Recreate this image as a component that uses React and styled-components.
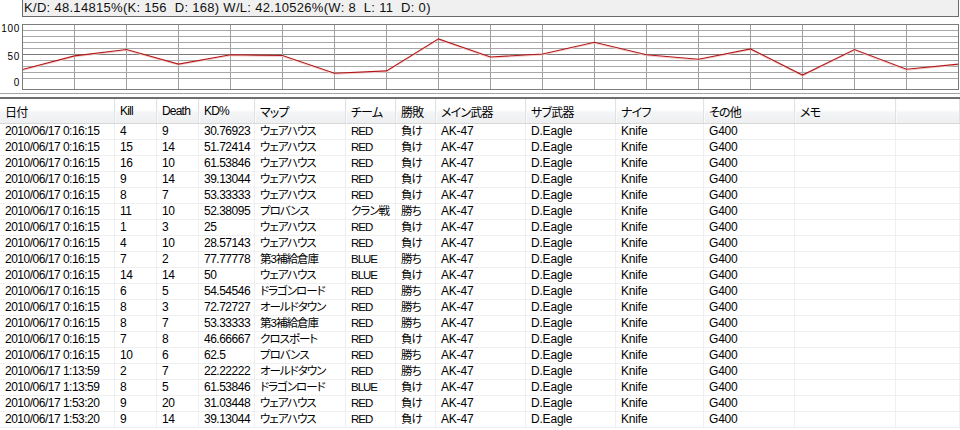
import React from "react";
import styled, { createGlobalStyle, css } from "styled-components";

const GlobalStyle = createGlobalStyle`
  html, body {
    margin: 0;
    padding: 0;
    background: #ffffff;
  }
  body {
    width: 960px;
    height: 430px;
    overflow: hidden;
    font-family: "Liberation Sans", "Noto Sans CJK JP", sans-serif;
    color: #000;
  }
`;

const matches = [
  ["2010/06/17 0:16:15", 4, 9, "30.76923", "ウェアハウス", "RED", "負け"],
  ["2010/06/17 0:16:15", 15, 14, "51.72414", "ウェアハウス", "RED", "負け"],
  ["2010/06/17 0:16:15", 16, 10, "61.53846", "ウェアハウス", "RED", "負け"],
  ["2010/06/17 0:16:15", 9, 14, "39.13044", "ウェアハウス", "RED", "負け"],
  ["2010/06/17 0:16:15", 8, 7, "53.33333", "ウェアハウス", "RED", "負け"],
  ["2010/06/17 0:16:15", 11, 10, "52.38095", "プロバンス", "クラン戦", "勝ち"],
  ["2010/06/17 0:16:15", 1, 3, "25", "ウェアハウス", "RED", "負け"],
  ["2010/06/17 0:16:15", 4, 10, "28.57143", "ウェアハウス", "RED", "負け"],
  ["2010/06/17 0:16:15", 7, 2, "77.77778", "第3補給倉庫", "BLUE", "勝ち"],
  ["2010/06/17 0:16:15", 14, 14, "50", "ウェアハウス", "BLUE", "負け"],
  ["2010/06/17 0:16:15", 6, 5, "54.54546", "ドラゴンロード", "RED", "勝ち"],
  ["2010/06/17 0:16:15", 8, 3, "72.72727", "オールドタウン", "RED", "勝ち"],
  ["2010/06/17 0:16:15", 8, 7, "53.33333", "第3補給倉庫", "RED", "勝ち"],
  ["2010/06/17 0:16:15", 7, 8, "46.66667", "クロスポート", "RED", "負け"],
  ["2010/06/17 0:16:15", 10, 6, "62.5", "プロバンス", "RED", "勝ち"],
  ["2010/06/17 1:13:59", 2, 7, "22.22222", "オールドタウン", "RED", "勝ち"],
  ["2010/06/17 1:13:59", 8, 5, "61.53846", "ドラゴンロード", "BLUE", "負け"],
  ["2010/06/17 1:53:20", 9, 20, "31.03448", "ウェアハウス", "RED", "負け"],
  ["2010/06/17 1:53:20", 9, 14, "39.13044", "ウェアハウス", "RED", "負け"],
];

const columns = [
  { title: "日付", width: 115, kind: "num" },
  { title: "Kill", width: 42, kind: "num" },
  { title: "Death", width: 42, kind: "num" },
  { title: "KD%", width: 56, kind: "num" },
  { title: "マップ", width: 91, kind: "jp" },
  { title: "チーム", width: 50, kind: "jp" },
  { title: "勝敗", width: 40, kind: "jp" },
  { title: "メイン武器", width: 90, kind: "latin" },
  { title: "サブ武器", width: 90, kind: "latin" },
  { title: "ナイフ", width: 88, kind: "latin" },
  { title: "その他", width: 91, kind: "latin" },
  { title: "メモ", width: 101, kind: "latin" },
];

const gridTemplate = columns.map((c) => `${c.width}px`).join(" ") + " 1fr";

/* ---------- top summary panel ---------- */

const TopPanel = styled.section`
  height: 94px;
  box-sizing: border-box;
  border-bottom: 1px solid #a3a3a3;
  display: flex;
  flex-direction: column;
`;

const StatBox = styled.div`
  margin-left: 22px;
  width: 937px;
  height: 17px;
  box-sizing: border-box;
  border: 1px solid #6b6b6b;
  border-top: none;
  background: #f0f0f0;
  padding-left: 1px;
  font-family: "Liberation Sans", sans-serif;
  font-size: 13px;
  line-height: 15px;
  letter-spacing: 0.3px;
  white-space: pre;
  color: #111;
`;

const ChartRow = styled.div`
  display: flex;
  margin-top: 7px;
`;

const AxisColumn = styled.div`
  width: 22px;
  display: flex;
  flex-direction: column;
  align-items: flex-end;
  padding-right: 2px;
  box-sizing: border-box;
`;

const AxisLabel = styled.span`
  margin-top: ${(p) => p.$gap}px;
  font-family: "Liberation Sans", sans-serif;
  font-size: 10px;
  line-height: 10px;
  letter-spacing: 0.7px;
  color: #000;
`;

/* ---------- list view ---------- */

const ListView = styled.section`
  margin-top: 3px;
  border-top: 2px solid #6f6f6f;
  flex: 1;
  overflow: hidden;
`;

const HeaderRow = styled.div`
  display: grid;
  grid-template-columns: ${gridTemplate};
  height: 25px;
  box-sizing: border-box;
  border-bottom: 1px solid #d8d8d8;
  background: linear-gradient(to bottom, #ffffff 0%, #ffffff 45%, #f4f5f6 55%, #eeeff1 100%);
`;

const HeaderCell = styled.div`
  display: flex;
  align-items: center;
  padding-left: 5px;
  border-right: 1px solid #dfe2e6;
  box-shadow: 1px 0 0 #fbfbfb;
  font-size: 12px;
  letter-spacing: -0.8px;
  font-feature-settings: "palt";
  white-space: nowrap;
  overflow: hidden;
  color: #000;
`;

const DataRow = styled.div`
  display: grid;
  grid-template-columns: ${gridTemplate};
  height: 16px;
`;

const cellKinds = {
  num: css`
    font-size: 12px;
    letter-spacing: -0.5px;
  `,
  jp: css`
    font-size: 11.5px;
    letter-spacing: -1px;
  `,
  latin: css`
    font-size: 12px;
    letter-spacing: -0.2px;
  `,
};

const Cell = styled.div`
  box-sizing: border-box;
  padding-left: 5px;
  border-right: 1px solid #efefef;
  border-bottom: 1px solid #efefef;
  font-family: "Liberation Sans", "Noto Sans CJK JP", sans-serif;
  line-height: 15px;
  font-feature-settings: "palt";
  white-space: nowrap;
  overflow: hidden;
  color: #000;
  ${(p) => cellKinds[p.$kind] || cellKinds.latin}
`;

const Page = styled.div`
  width: 960px;
  height: 430px;
  display: flex;
  flex-direction: column;
  overflow: hidden;
  background: #fff;
`;

/* ---------- KD% line chart ---------- */

function KdChart({ values }) {
  const w = 937;
  const h = 66;
  const step = 52;
  const pts = values.map((v, i) => [0.5 + i * step, 65.5 - v * 0.65]);
  const line = pts.map(([x, y]) => `${x},${y.toFixed(1)}`).join(" ");
  const halo = pts.map(([x, y]) => `${x},${(y + 1).toFixed(1)}`).join(" ");
  const hLines = [6.5, 12.5, 18.5, 24.5, 36.5, 42.5, 48.5, 54.5];
  const vLines = values.slice(1, -1).map((_, i) => 0.5 + (i + 1) * step);
  return (
    <svg width={w} height={h} viewBox={`0 0 ${w} ${h}`} style={{ display: "block" }}>
      <rect x="0" y="0" width={w} height={h} fill="#ffffff" />
      {hLines.map((y) => (
        <line key={y} x1="0" x2={w} y1={y} y2={y} stroke="#a8a8a8" strokeWidth="1" />
      ))}
      <line x1="0" x2={w} y1="30.5" y2="30.5" stroke="#7a7a7a" strokeWidth="1" />
      {vLines.map((x) => (
        <line key={x} x1={x} x2={x} y1="0" y2={h} stroke="#a0a0a0" strokeWidth="1" />
      ))}
      <polyline points={halo} fill="none" stroke="#f6cccc" strokeWidth="1" />
      <polyline points={line} fill="none" stroke="#b41818" strokeWidth="1.1" />
      <rect x="0.5" y="0.5" width={w - 1} height={h - 1} fill="none" stroke="#7c7c7c" strokeWidth="1" />
    </svg>
  );
}

export default function App() {
  const kd = matches.map((m) => parseFloat(m[3]));
  return (
    <>
      <GlobalStyle />
      <Page>
        <TopPanel>
          <StatBox>{"K/D: 48.14815%(K: 156  D: 168) W/L: 42.10526%(W: 8  L: 11  D: 0)"}</StatBox>
          <ChartRow>
            <AxisColumn>
              <AxisLabel $gap={0}>100</AxisLabel>
              <AxisLabel $gap={18}>50</AxisLabel>
              <AxisLabel $gap={16}>0</AxisLabel>
            </AxisColumn>
            <KdChart values={kd} />
          </ChartRow>
        </TopPanel>
        <ListView>
          <HeaderRow>
            {columns.map((c) => (
              <HeaderCell key={c.title}>{c.title}</HeaderCell>
            ))}
            <HeaderCell />
          </HeaderRow>
          {matches.map((m, i) => {
            const cells = [...m, "AK-47", "D.Eagle", "Knife", "G400", ""];
            return (
              <DataRow key={i}>
                {cells.map((v, j) => (
                  <Cell key={j} $kind={columns[j].kind}>
                    {v}
                  </Cell>
                ))}
                <Cell />
              </DataRow>
            );
          })}
        </ListView>
      </Page>
    </>
  );
}
